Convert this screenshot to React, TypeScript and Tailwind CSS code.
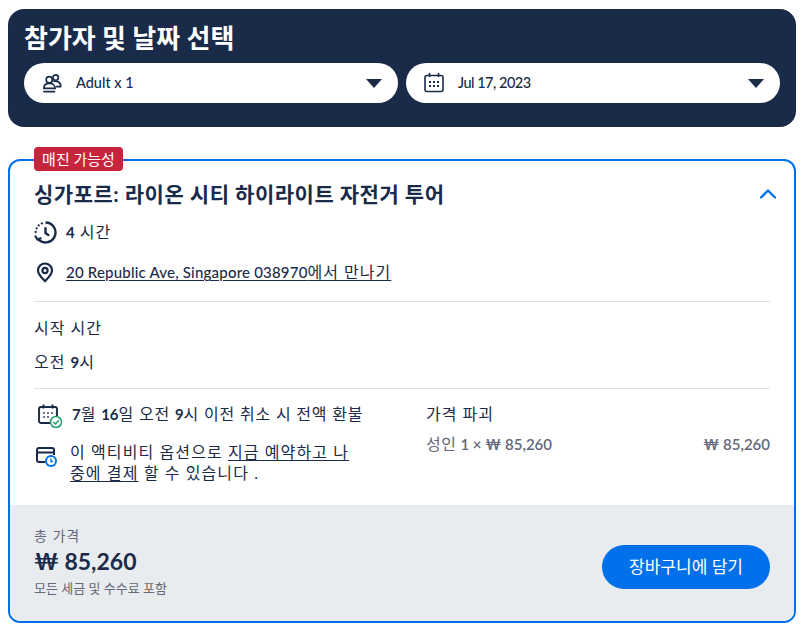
import { ChevronUp } from 'lucide-react';

const fontStack = "font-['Lato','Noto_Sans_CJK_KR',sans-serif]";

function Caret() {
  return (
    <svg width="16" height="9" viewBox="0 0 16 9" className="shrink-0">
      <path d="M0 0h16L8 9z" fill="#1a2b49" />
    </svg>
  );
}

function PeopleIcon() {
  return (
    <svg width="20" height="20" viewBox="0 0 22 22" fill="none" stroke="#1a2b49" strokeWidth="1.900">
      <circle cx="8" cy="7.500" r="3.400" />
      <circle cx="15" cy="5" r="3" />
      <path d="M2 17c0-3.800 2.700-5.500 6-5.500s6.500 1.700 6.500 5.500z" strokeLinejoin="round" />
      <path d="M12.500 9.300c4-1.300 8.500.7 8 5.700H15.500" strokeLinejoin="round" />
      <path d="M1.500 20.500h13" />
    </svg>
  );
}

function CalendarIcon() {
  return (
    <svg width="20" height="20" viewBox="0 0 20 20" fill="none" stroke="#1a2b49" strokeWidth="1.600">
      <rect x="1" y="2.500" width="18" height="16" rx="2" />
      <path d="M5.500 0v4M14.500 0v4" />
      <g fill="#1a2b49" stroke="none">
        <rect x="5" y="8" width="2" height="2" />
        <rect x="9" y="8" width="2" height="2" />
        <rect x="13" y="8" width="2" height="2" />
        <rect x="5" y="12" width="2" height="2" />
        <rect x="9" y="12" width="2" height="2" />
        <rect x="13" y="12" width="2" height="2" />
      </g>
    </svg>
  );
}

function HistoryIcon() {
  return (
    <svg width="23" height="23" viewBox="0 0 22 22" fill="none" stroke="#1a2b49" strokeWidth="2.300">
      <path d="M11 1.500a9.500 9.500 0 1 1-7.500 15.300" />
      <path d="M11 6v5.500l3.500 2.500" />
      <path d="M1 14l2.200 3.700 4-1.500" strokeWidth="2" />
      <g fill="#1a2b49" stroke="none">
        <circle cx="7.500" cy="2.300" r="1.100" />
        <circle cx="4.500" cy="4.200" r="1.100" />
        <circle cx="2.500" cy="7" r="1.100" />
        <circle cx="1.600" cy="10.500" r="1.100" />
      </g>
    </svg>
  );
}

function PinIcon() {
  return (
    <svg width="16" height="21" viewBox="0 0 16 20" fill="none" stroke="#1a2b49" strokeWidth="2.200">
      <path d="M8 18.700C4.500 15 1 11.800 1 8a7 7 0 0 1 14 0c0 3.800-3.500 7-7 10.700z" strokeLinejoin="round" />
      <circle cx="8" cy="8" r="2.600" />
    </svg>
  );
}

function RefundIcon() {
  return (
    <svg width="24" height="24" viewBox="0 0 24 24" fill="none" className="mt-[4px] shrink-0">
      <g stroke="#1a2b49" strokeWidth="1.900">
        <path d="M12 19H3a2 2 0 0 1-2-2V5a2 2 0 0 1 2-2h14a2 2 0 0 1 2 2v7" />
        <path d="M5.500 .5v4M14.500 .5v4" />
      </g>
      <g fill="#6b7689">
        <rect x="5" y="8" width="2" height="2" />
        <rect x="9" y="8" width="2" height="2" />
        <rect x="13" y="8" width="2" height="2" />
        <rect x="5" y="12" width="2" height="2" />
        <rect x="9" y="12" width="2" height="2" />
      </g>
      <circle cx="18" cy="18" r="5.500" fill="#fff" stroke="#1e9e6a" strokeWidth="1.500" />
      <path d="M15.300 18l2 2 3.500-3.800" stroke="#1e9e6a" strokeWidth="1.500" />
    </svg>
  );
}

function PayLaterIcon() {
  return (
    <svg width="22" height="22" viewBox="0 0 22 22" fill="none">
      <path d="M9 16H3a2 2 0 0 1-2-2V4a2 2 0 0 1 2-2h13a2 2 0 0 1 2 2v5" stroke="#1a2b49" strokeWidth="2" />
      <path d="M1 6.500h17" stroke="#1a2b49" strokeWidth="2" />
      <circle cx="15" cy="15" r="6" fill="#0071eb" />
      <circle cx="15" cy="15" r="4" fill="#fff" />
      <path d="M15 12.500V15.500h2" stroke="#0071eb" strokeWidth="1.400" />
    </svg>
  );
}

// latin runs sit slightly smaller than the hangul around them
function Num({ children }: { children: React.ReactNode }) {
  return <span className="text-[15px] font-bold tracking-normal">{children}</span>;
}

export default function App() {
  return (
    <div className={`${fontStack} min-h-screen bg-white pl-2 pr-[9px] pt-[9px] text-[#1a2b49]`}>
      <section className="h-[118px] rounded-2xl bg-[#1a2b49] px-4 pt-[13px]">
        <h2 className="text-[26px] leading-[32px] font-bold text-white">참가자 및 날짜 선택</h2>
        <div className="mt-[9px] grid grid-cols-2 gap-2">
          <button className="flex h-10 items-center rounded-full bg-white pl-[18px] pr-4">
            <PeopleIcon />
            <span className="ml-[14px] flex-1 text-left text-[14.5px] font-medium">Adult x 1</span>
            <Caret />
          </button>
          <button className="flex h-10 items-center rounded-full bg-white pl-[18px] pr-4">
            <CalendarIcon />
            <span className="ml-[14px] flex-1 text-left text-[14.5px] font-medium tracking-[-0.5px]">Jul 17, 2023</span>
            <Caret />
          </button>
        </div>
      </section>

      <section className="relative mt-8 h-[464px] rounded-xl border-2 border-[#0071eb]">
        <span className="absolute -top-[14px] left-6 flex h-6 w-[89px] items-center justify-center rounded bg-[#c7253e] text-[15px] text-white">
          매진 가능성
        </span>
        <div className="px-6 pt-[19px] text-[16px] tracking-[1px]">
          <div className="flex items-center justify-between">
            <h3 className="text-[21px] leading-7 font-bold tracking-[0.5px]">싱가포르: 라이온 시티 하이라이트 자전거 투어</h3>
            <ChevronUp className="-mr-[12px] h-7 w-7 text-[#0071eb]" strokeWidth={2} />
          </div>
          <div className="mt-3 flex h-6 items-center">
            <HistoryIcon />
            <span className="ml-[9px]">
              <Num>4</Num> 시간
            </span>
          </div>
          <div className="mt-4 flex h-6 items-center pl-[3px]">
            <PinIcon />
            <span className="ml-[13px] underline underline-offset-2">
              <span className="text-[15px] font-medium tracking-[0.2px]">20 Republic Ave, Singapore 038970</span>에서 만나기
            </span>
          </div>
          <div className="mt-[17px] border-t border-[#dcdfe4]" />
          <p className="mt-[15px] leading-[22px]">시작 시간</p>
          <p className="mt-[12px] leading-[22px]">
            오전 <Num>9</Num>시
          </p>
          <div className="mt-[15px] border-t border-[#dcdfe4]" />
          <div className="mt-[14px] flex">
            <div className="w-[392px]">
              <div className="flex h-[22px] items-center pl-1">
                <RefundIcon />
                <span className="ml-[10px] leading-[22px] tracking-[0.8px]">
                  <Num>7</Num>월 <Num>16</Num>일 오전 <Num>9</Num>시 이전 취소 시 전액 환불
                </span>
              </div>
              <div className="mt-4 flex pl-[2px]">
                <div className="mt-[5px] shrink-0"><PayLaterIcon /></div>
                <p className="ml-3 w-[285px] leading-[21px] tracking-[1.1px]">
                  이 액티비티 옵션으로 <span className="underline underline-offset-2">지금 예약하고 나중에 결제</span> 할 수 있습니다 .
                </p>
              </div>
            </div>
            <div className="flex-1">
              <p className="leading-[22px]">가격 파괴</p>
              <div className="mt-2 flex justify-between text-[15px] leading-[22px] font-semibold tracking-normal text-[#63687a]">
                <span>
                  <span className="text-[16px] font-normal tracking-[0.6px]">성인</span> 1 × ₩ 85,260
                </span>
                <span>₩ 85,260</span>
              </div>
            </div>
          </div>
        </div>
        <div className="absolute inset-x-0 bottom-0 flex h-[116px] items-start justify-between rounded-b-[10px] bg-[#e9ecef] pl-6 pr-6">
          <div className="pt-[21px]">
            <p className="text-[14px] leading-5 tracking-[1px] text-[#63687a]">총 가격</p>
            <p className="text-[23px] leading-[30px] font-bold">₩ 85,260</p>
            <p className="mt-1 text-[13px] leading-4 text-[#63687a]">모든 세금 및 수수료 포함</p>
          </div>
          <button className="mt-[40px] h-11 w-[168px] rounded-full bg-[#0071eb] text-[17px] text-white">장바구니에 담기</button>
        </div>
      </section>
    </div>
  );
}
